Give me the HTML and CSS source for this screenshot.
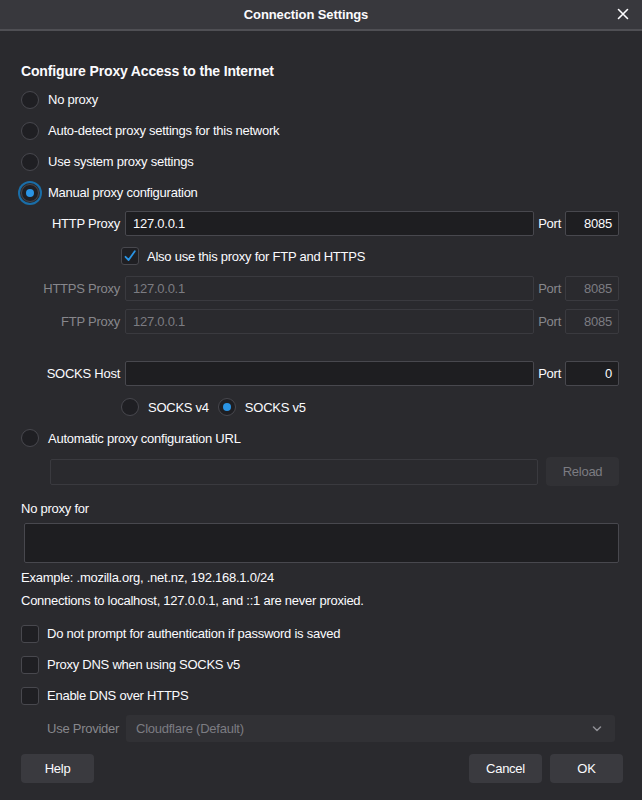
FILE: index.html
```html
<!DOCTYPE html>
<html>
<head>
<meta charset="utf-8">
<link rel="stylesheet" href="styles.css">
</head>
<body>
<div class="titlebar">
  <span class="title">Connection Settings</span>
  <svg class="close" width="12" height="12" viewBox="0 0 12 12"><path d="M1.5 1.5 L10.5 10.5 M10.5 1.5 L1.5 10.5" stroke="#fbfbfe" stroke-width="1.6" stroke-linecap="round"/></svg>
</div>
<div class="content">
  <h1 class="heading">Configure Proxy Access to the Internet</h1>
  <div class="radios">
    <div class="opt"><span class="radio"></span><span>No proxy</span></div>
    <div class="opt"><span class="radio"></span><span>Auto-detect proxy settings for this network</span></div>
    <div class="opt"><span class="radio"></span><span>Use system proxy settings</span></div>
    <div class="opt"><span class="radio checked focus"></span><span>Manual proxy configuration</span></div>
  </div>

  <div class="prow r-http">
    <span class="plabel">HTTP Proxy</span>
    <div class="input host">127.0.0.1</div>
    <span class="portlabel">Port</span>
    <div class="input port">8085</div>
  </div>
  <div class="also">
    <span class="checkbox on"><svg width="14" height="14" viewBox="0 0 14 14"><path d="M2.5 7.8 L5.6 11 L11.8 2.2" fill="none" stroke="#2a94e4" stroke-width="1.8" stroke-linecap="round" stroke-linejoin="round"/></svg></span>
    <span>Also use this proxy for FTP and HTTPS</span>
  </div>
  <div class="prow disabled r-https">
    <span class="plabel">HTTPS Proxy</span>
    <div class="input host">127.0.0.1</div>
    <span class="portlabel">Port</span>
    <div class="input port">8085</div>
  </div>
  <div class="prow disabled r-ftp">
    <span class="plabel">FTP Proxy</span>
    <div class="input host">127.0.0.1</div>
    <span class="portlabel">Port</span>
    <div class="input port">8085</div>
  </div>
  <div class="prow r-socks">
    <span class="plabel">SOCKS Host</span>
    <div class="input host"></div>
    <span class="portlabel">Port</span>
    <div class="input port">0</div>
  </div>
  <div class="socksver">
    <span class="radio"></span><span class="v4">SOCKS v4</span>
    <span class="radio checked"></span><span>SOCKS v5</span>
  </div>
  <div class="opt autourl"><span class="radio"></span><span>Automatic proxy configuration URL</span></div>
  <div class="urlrow">
    <div class="input url"></div>
    <div class="btn reload">Reload</div>
  </div>
  <div class="noproxy">No proxy for</div>
  <div class="textarea"></div>
  <div class="hint h1">Example: .mozilla.org, .net.nz, 192.168.1.0/24</div>
  <div class="hint h2">Connections to localhost, 127.0.0.1, and ::1 are never proxied.</div>
  <div class="checks">
    <div class="chk"><span class="checkbox"></span><span>Do not prompt for authentication if password is saved</span></div>
    <div class="chk"><span class="checkbox"></span><span>Proxy DNS when using SOCKS v5</span></div>
    <div class="chk"><span class="checkbox"></span><span>Enable DNS over HTTPS</span></div>
  </div>
  <div class="provider">
    <span class="provlabel">Use Provider</span>
    <div class="select"><span>Cloudflare (Default)</span>
      <svg width="10" height="6" viewBox="0 0 10 6"><path d="M1.5 1 L5 4.5 L8.5 1" fill="none" stroke="#8f8f95" stroke-width="1.5" stroke-linecap="round" stroke-linejoin="round"/></svg>
    </div>
  </div>
  <div class="footer">
    <div class="btn">Help</div>
    <div class="spacer"></div>
    <div class="btn">Cancel</div>
    <div class="btn">OK</div>
  </div>
</div>
</body>
</html>
```
FILE: styles.css
```css
* { box-sizing: border-box; }
html, body { margin: 0; padding: 0; }
body {
  width: 642px;
  height: 800px;
  background: #2a2a2e;
  color: #fbfbfe;
  font-family: "Liberation Sans", Arial, sans-serif;
  font-size: 13px;
  letter-spacing: -0.25px;
  overflow: hidden;
  position: relative;
}
.titlebar {
  height: 31px;
  background: #38383d;
  border-bottom: 2px solid #4f4f54;
  display: flex;
  align-items: center;
  justify-content: center;
  padding-right: 30px;
  position: relative;
}
.title { font-weight: bold; font-size: 13px; letter-spacing: -0.1px; }
.close { position: absolute; right: 13px; top: 8px; }
.content { padding: 0 23px 0 21px; }
.heading {
  margin: 30px 0 0 0;
  font-size: 14px;
  font-weight: bold;
  line-height: 20px;
  letter-spacing: -0.15px;
}
.radios { margin-top: 3px; }
.opt {
  display: flex;
  align-items: center;
  height: 31px;
  gap: 9px;
}
.radio {
  width: 18px; height: 18px;
  border-radius: 50%;
  background: #1f1f23;
  border: 1px solid #48484e;
  display: inline-flex;
  align-items: center;
  justify-content: center;
  flex: none;
}
.radio.checked::after {
  content: "";
  width: 8px; height: 8px;
  border-radius: 50%;
  background: #2a94e4;
}
.radio.focus { box-shadow: 0 0 0 1px #2a2a2e, 0 0 0 3px #1a6ea8; }
.prow {
  display: flex;
  align-items: center;
  height: 25px;
}
.plabel { width: 99px; text-align: right; margin-right: 5px; flex: none; }
.portlabel { margin: 0 4px; flex: none; }
.input {
  height: 25px;
  background: #1e1e21;
  border: 1px solid #48484e;
  border-radius: 2px;
  display: flex;
  align-items: center;
  padding: 0 7px;
}
.host { flex: 1; }
.port { width: 54px; flex: none; justify-content: flex-end; padding-right: 6px; }
.r-http { margin-top: 3px; }
.also {
  display: flex; align-items: center; gap: 8px;
  height: 30px; margin-top: 5px; padding-left: 100px;
}
.checkbox {
  width: 18px; height: 18px;
  border: 1px solid #48484e;
  border-radius: 3px;
  background: #1f1f23;
  display: inline-flex; align-items: center; justify-content: center;
  flex: none;
}
.r-https { margin-top: 5px; }
.r-ftp { margin-top: 8px; }
.disabled { color: #87878c; }
.disabled .input { background: #2a2a2e; border-color: #3a3a3f; color: #7c7c82; }
.r-socks { margin-top: 27px; }
.socksver {
  display: flex; align-items: center;
  height: 30px; margin-top: 6px; padding-left: 100px;
}
.socksver .radio + span { margin-left: 9px; }
.socksver .v4 { margin-right: 9px; }
.autourl { height: 30px; margin-top: 1px; }
.urlrow {
  display: flex; align-items: center; gap: 8px;
  height: 29px; margin-top: 4px; padding-left: 29px;
}
.url { flex: 1; height: 26px; background: #2a2a2e; border-color: #3a3a3f; }
.btn {
  width: 73px; height: 29px;
  background: #3a3a3f;
  border-radius: 4px;
  display: flex; align-items: center; justify-content: center;
  flex: none;
}
.reload { background: #313135; color: #7c7c82; }
.noproxy { margin-top: 14px; line-height: 18px; }
.textarea {
  margin: 5px 0 0 3px;
  height: 40px;
  background: #1e1e21;
  border: 1px solid #48484e;
  border-radius: 2px;
}
.hint { line-height: 18px; }
.h1 { margin-top: 6px; }
.h2 { margin-top: 5px; }
.checks { margin-top: 8px; }
.chk { display: flex; align-items: center; gap: 8px; height: 31px; }
.provider {
  display: flex; align-items: center;
  margin: 4px 4px 0 26px;
  height: 27px;
}
.provlabel { color: #87878c; width: 79px; flex: none; }
.select {
  flex: 1; height: 27px;
  background: #313135;
  border-radius: 3px;
  display: flex; align-items: center; justify-content: space-between;
  padding: 0 13px 0 10px;
  color: #7c7c82;
}
.footer {
  display: flex; gap: 8px;
  margin: 12px -4px 0 0;
}
.spacer { flex: 1; }
```
